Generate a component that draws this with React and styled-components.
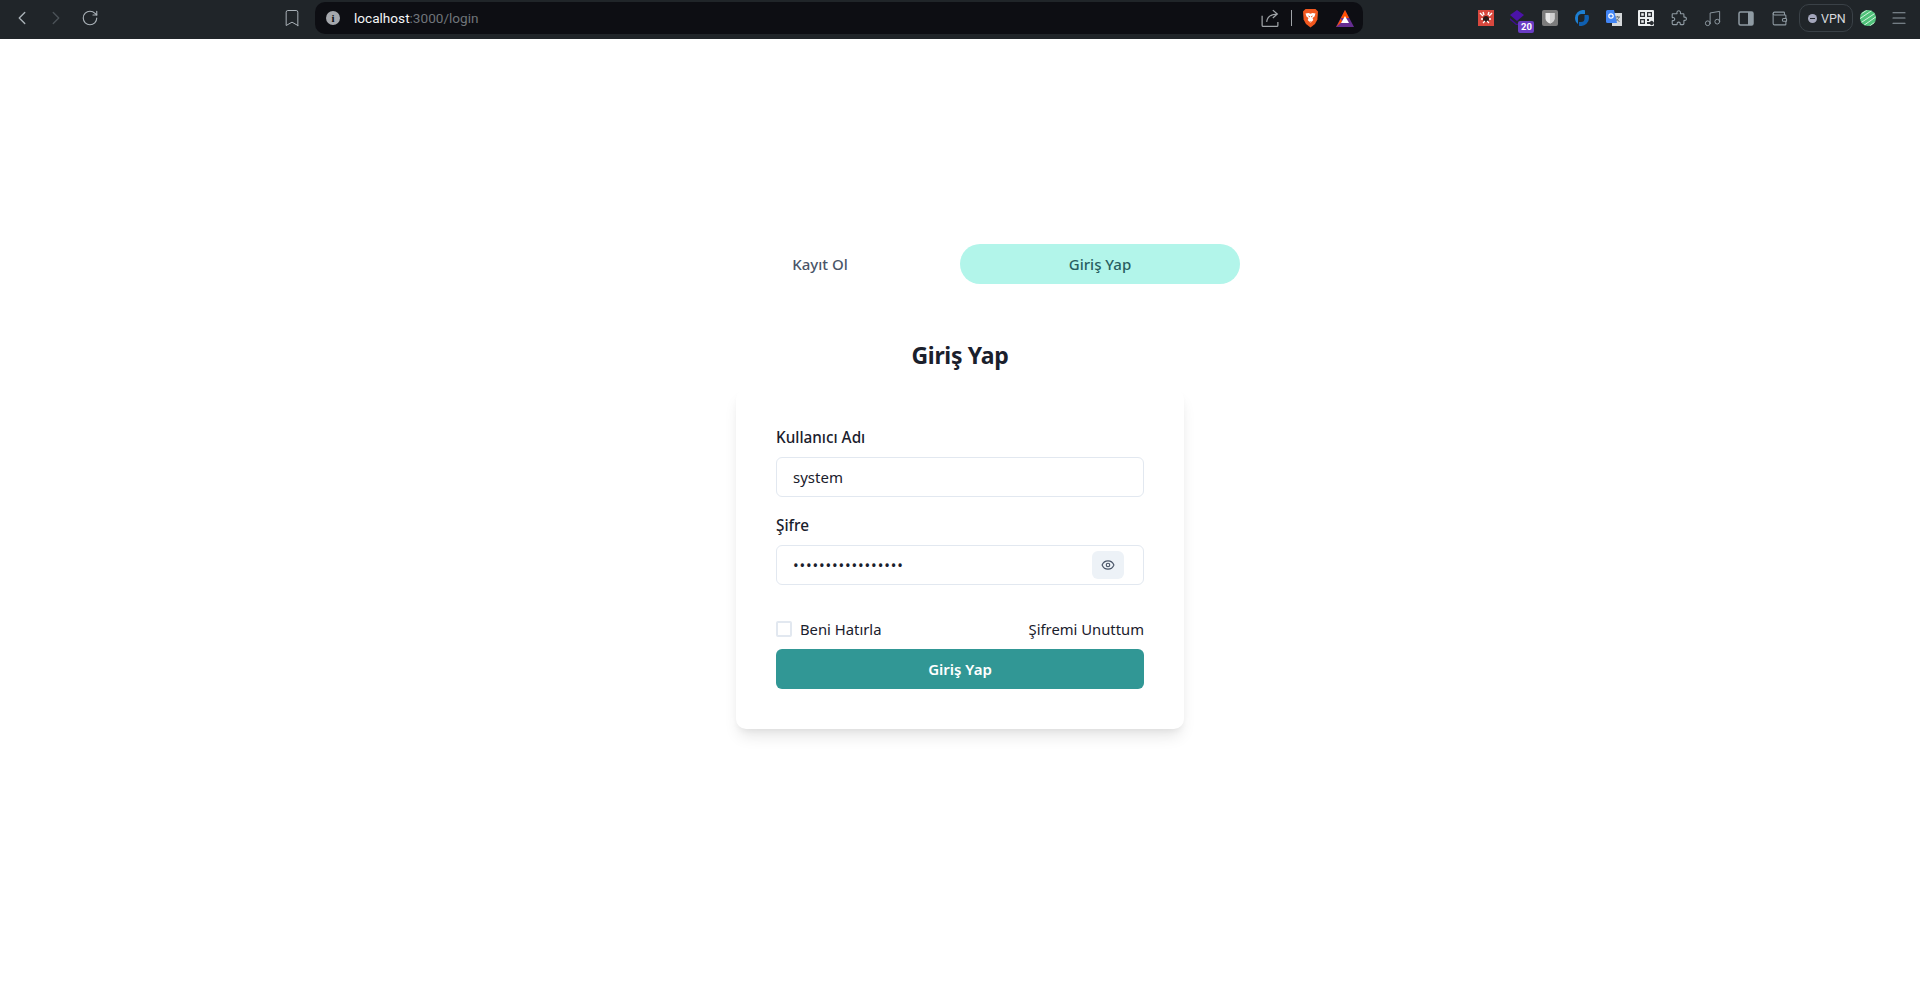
import React from 'react';
import styled, { createGlobalStyle } from 'styled-components';
import { ChevronLeft, ChevronRight, RotateCw, Bookmark, Music, Wallet, Eye, Menu } from 'lucide-react';

const GlobalStyle = createGlobalStyle`
  html, body {
    margin: 0;
    padding: 0;
    background: #fff;
    font-family: "Noto Sans", "Open Sans", sans-serif;
  }
  * { box-sizing: border-box; }
`;

const Page = styled.div`
  display: flex;
  flex-direction: column;
  height: 987px;
  overflow: hidden;
`;

const Toolbar = styled.header`
  display: flex;
  align-items: center;
  height: 39px;
  flex: none;
  background: #202529;
  padding: 0 6px 3px 5px;
`;

const NavButton = styled.div`
  display: flex;
  align-items: center;
  justify-content: center;
  width: 34px;
  height: 30px;
  flex: none;
  color: ${p => p.$color || '#aab2b8'};
`;

const NavGroup = styled.div`
  display: flex;
  align-items: center;
  flex: none;
  width: 310px;
`;

const BookmarkSlot = styled(NavButton)`
  margin-left: auto;
  margin-right: 6px;
`;

const AddressBar = styled.div`
  display: flex;
  align-items: center;
  width: 1048px;
  height: 32px;
  flex: none;
  border-radius: 10px;
  background: #0d0e13;
  padding: 0 0 0 11px;
`;

const InfoDot = styled.div`
  display: flex;
  align-items: center;
  justify-content: center;
  width: 14px;
  height: 14px;
  border-radius: 50%;
  background: #a5a8ad;
  color: #0d0e13;
  font-family: "Liberation Serif", serif;
  font-weight: 700;
  font-size: 11px;
  margin-right: 14px;
`;

const UrlHost = styled.span`
  font-family: Roboto, sans-serif;
  font-size: 13.6px;
  color: #f4f5f6;
`;

const UrlPath = styled.span`
  font-family: Roboto, sans-serif;
  font-size: 13.6px;
  color: #70757a;
`;

const AddressActions = styled.div`
  display: flex;
  align-items: center;
  margin-left: auto;
  padding-right: 1px;
`;

const Divider = styled.div`
  width: 1px;
  height: 16px;
  background: #a0a4a8;
  margin: 0 10px 0 12px;
`;

const BatSlot = styled(NavButton)`
  margin-left: 9px;
`;

const ExtensionGroup = styled.div`
  display: flex;
  align-items: center;
  margin-left: auto;
`;

const Ext = styled.div`
  display: flex;
  align-items: center;
  justify-content: center;
  position: relative;
  width: ${p => p.$w || 32}px;
  height: 30px;
  flex: none;
  color: #8f9ba3;
`;

const CountBadge = styled.span`
  position: absolute;
  right: 0;
  bottom: 0;
  width: 16px;
  height: 12px;
  border-radius: 2px;
  background: #6a3cc4;
  color: #fff;
  font-family: Roboto, sans-serif;
  font-weight: 700;
  font-size: 9.5px;
  line-height: 12px;
  text-align: center;
`;

const VpnPill = styled.div`
  display: flex;
  align-items: center;
  gap: 4px;
  width: 54px;
  height: 28px;
  flex: none;
  margin-left: 3px;
  padding-left: 8px;
  border: 1px solid #3a4147;
  border-radius: 10px;
  color: #d6d9dc;
  font-family: Roboto, sans-serif;
  font-size: 12.5px;
`;

const VpnDot = styled.span`
  display: flex;
  align-items: center;
  justify-content: center;
  width: 9px;
  height: 9px;
  border-radius: 50%;
  background: #a3a6bb;
  &::after {
    content: '';
    width: 5px;
    height: 1px;
    background: #202529;
  }
`;

const Content = styled.main`
  display: flex;
  flex-direction: column;
  align-items: center;
  padding-top: 205px;
`;

const Tabs = styled.div`
  display: flex;
  width: 560px;
`;

const Tab = styled.button`
  flex: 1;
  height: 40px;
  border: none;
  border-radius: 9999px;
  background: ${p => (p.$active ? '#b2f5ea' : 'transparent')};
  color: ${p => (p.$active ? '#285e61' : '#4a5568')};
  font-family: inherit;
  font-size: 15px;
  font-weight: 500;
  padding: 0;
`;

const Title = styled.h2`
  margin: 51px 0 0;
  height: 40px;
  line-height: 40px;
  font-size: 23px;
  letter-spacing: -0.3px;
  font-weight: 700;
  color: #1a202c;
`;

const Card = styled.form`
  width: 448px;
  margin-top: 14px;
  padding: 36px 40px 40px;
  border-radius: 10px;
  background: #fff;
  box-shadow: 0 10px 15px -3px rgba(0, 0, 0, 0.1), 0 4px 6px -2px rgba(0, 0, 0, 0.05);
`;

const Field = styled.div`
  margin-bottom: 16px;
`;

const Label = styled.label`
  display: block;
  height: 24px;
  line-height: 24px;
  margin-bottom: 8px;
  font-size: 15.3px;
  font-weight: 500;
  color: #1a202c;
`;

const InputWrap = styled.div`
  position: relative;
`;

const Input = styled.input`
  display: block;
  width: 100%;
  height: 40px;
  padding: 0 16px;
  border: 1px solid #e2e8f0;
  border-radius: 6px;
  outline: none;
  background: #fff;
  color: #1a202c;
  font-family: inherit;
  font-size: 15px;
  letter-spacing: ${p => (p.type === 'password' ? '0.87px' : 'normal')};
`;

const EyeButton = styled.button`
  position: absolute;
  top: 6px;
  right: 20px;
  display: flex;
  align-items: center;
  justify-content: center;
  width: 32px;
  height: 28px;
  padding: 0;
  border: none;
  border-radius: 6px;
  background: #edf2f7;
  color: #4a5568;
`;

const OptionsRow = styled.div`
  display: flex;
  align-items: center;
  justify-content: space-between;
  height: 24px;
  margin-top: 32px;
`;

const Remember = styled.label`
  display: flex;
  align-items: center;
  gap: 8px;
  font-size: 14.8px;
  color: #1a202c;
`;

const CheckBox = styled.span`
  width: 16px;
  height: 16px;
  border: 2px solid #e2e8f0;
  border-radius: 2px;
  background: #fff;
`;

const ForgotLink = styled.a`
  font-size: 14.8px;
  color: #1a202c;
`;

const Submit = styled.button`
  display: block;
  width: 100%;
  height: 40px;
  margin-top: 8px;
  border: none;
  border-radius: 6px;
  background: #319795;
  color: #fff;
  font-family: inherit;
  font-size: 15px;
  font-weight: 600;
`;

const ShareIcon = () => (
  <svg width="18" height="18" viewBox="0 0 16 16" fill="none" stroke="#a0a4a8" strokeWidth="1.100">
    <path d="M1 6v8.500a1 1 0 0 0 1 1h12a1 1 0 0 0 1-1v-3" />
    <path d="M5 11.500c.5-4 3.500-7 9.500-7M10.500 1l4 3.500-4 3.500" />
  </svg>
);

const BraveLion = () => (
  <svg width="17" height="20" viewBox="0 0 17 20">
    <path d="M3.500 1h10l2.500 2.500-.6 8L13 16l-4.500 3.500L4 16l-2.400-4.500L1 3.500z" fill="#f2581f" />
    <path d="M3.500 5.500 6.500 5l2 .8 2-.8 3 .5-1 3-2 1.500.8 2-2.800 3-2.800-3 .8-2-2-1.500z" fill="#fff" />
    <path d="M6.500 8 8 9M10.500 8 9 9M7.500 14h2" stroke="#f2581f" strokeWidth="1" />
  </svg>
);

const BatTriangle = () => (
  <svg width="18" height="17" viewBox="0 0 18 17">
    <path d="M9 0 18 17H0z" fill="#662d91" />
    <path d="M9 0 13 8H5z" fill="#ff5000" />
    <path d="M5 8 1.500 15 0 17l6-5z" fill="#ff5000" />
    <path d="M9 6 13 13H5z" fill="#fff" />
  </svg>
);

const RedExt = () => (
  <svg width="16" height="16" viewBox="0 0 16 16">
    <rect width="16" height="16" fill="#d8483e" />
    <circle cx="8" cy="9" r="3" fill="#2b1a18" />
    <path d="M2 3l3 3M14 3l-3 3M3 9h2M11 9h2M5 2l1 3M11 2l-1 3" stroke="#fff" strokeWidth="1.400" />
    <path d="M5 13l2-2M11 13l-2-2" stroke="#fff" strokeWidth="1.200" />
  </svg>
);

const PurpleGem = () => (
  <svg width="18" height="18" viewBox="0 0 18 18">
    <path d="M8 1l7 5-7 6-7-6z" fill="#4b13a8" />
    <path d="M1 9l7 6 3-2v3H7L1 11z" fill="#3d0f8e" />
  </svg>
);

const ShieldExt = () => (
  <svg width="16" height="16" viewBox="0 0 16 16">
    <rect width="16" height="16" rx="2" fill="#7c7c7c" />
    <path d="M3.500 3h9v5.500c0 2.500-2 4-4.500 5-2.500-1-4.500-2.500-4.500-5z" fill="#e8e8e8" />
    <path d="M8 3h4.500v5.500c0 2.500-2 4-4.500 5z" fill="#cfcfcf" />
  </svg>
);

const BlueSwirl = () => (
  <svg width="16" height="16" viewBox="0 0 16 16">
    <path d="M9.500 0a8 8 0 0 0-8.500 8c0 2.500 1 4.500 3 6V7.500A3.500 3.500 0 0 1 7.500 4H11V.2A8 8 0 0 0 9.500 0z" fill="#1d7fd1" />
    <path d="M6.500 16a8 8 0 0 0 8.500-8c0-1-.2-2-.6-3H10.500v3.500A3.500 3.500 0 0 1 7 12H5v3.800c.5.100 1 .2 1.500.2z" fill="#0f5fb0" />
  </svg>
);

const TranslateExt = () => (
  <svg width="16" height="16" viewBox="0 0 16 16">
    <rect x="6" y="3" width="10" height="13" fill="#d5d8da" />
    <path d="M9 7h5M11.500 6v1M13 7c-.5 2-2 3.500-4 4.500M10 8.500c.8 1.300 2 2.400 3.500 3" stroke="#6d7478" strokeWidth="1" fill="none" />
    <path d="M0 1.500A1.500 1.500 0 0 1 1.500 0H8l3 13H1.500A1.500 1.500 0 0 1 0 11.500z" fill="#4285f4" />
    <circle cx="5" cy="6" r="2.200" fill="none" stroke="#fff" strokeWidth="1.200" />
  </svg>
);

const QrExt = () => (
  <svg width="16" height="16" viewBox="0 0 16 16">
    <rect width="16" height="16" rx="1" fill="#eceff0" />
    <path d="M2 2h5v5H2zM3.200 3.200v2.600h2.600V3.200zM9 2h5v5H9zM10.200 3.200v2.600h2.600V3.200zM2 9h5v5H2zM3.200 10.200v2.600h2.600v-2.600z" fill="#2b2f33" fillRule="evenodd" />
    <path d="M9 9h2v2H9zM12 12a2 2 0 1 1 0 2h-3v-2z" fill="#2b2f33" />
  </svg>
);

const PuzzleOutline = () => (
  <svg width="16" height="16" viewBox="0 0 16 16" fill="none" stroke="#8f9ba3" strokeWidth="1.100" strokeLinejoin="round">
    <path d="M6 3.200C5.600 1.800 6.500.8 7.700.8s2.100 1 1.700 2.400c-.1.400.1.600.5.600h2.400c.4 0 .6.200.6.600v2.300c0 .4.200.6.600.5 1.100-.3 1.900.5 1.900 1.600s-.8 1.900-1.900 1.600c-.4-.1-.6.100-.6.500v2.700c0 .6-.4 1-1 1H9.700c-.4 0-.6-.2-.5-.6.300-1.100-.5-1.900-1.500-1.900s-1.800.8-1.500 1.900c.1.400-.1.600-.5.600H2.200c-.6 0-1-.4-1-1v-2.500c0-.4.200-.6.600-.5 1.100.3 1.900-.5 1.900-1.500s-.8-1.800-1.900-1.500c-.4.100-.6-.1-.6-.5V4.400c0-.4.200-.6.600-.6h3.700c.4 0 .6-.2.500-.6z" />
  </svg>
);

const PanelIcon = () => (
  <svg width="16" height="15" viewBox="0 0 16 15">
    <rect x="1" y="1" width="14" height="13" rx="1.500" fill="none" stroke="#8f9ba3" strokeWidth="1.500" />
    <rect x="10" y="1" width="5" height="13" fill="#8f9ba3" />
  </svg>
);

const SphereIcon = () => (
  <svg width="16" height="16" viewBox="0 0 16 16">
    <defs>
      <clipPath id="sphere"><circle cx="8" cy="8" r="8" /></clipPath>
    </defs>
    <g clipPath="url(#sphere)">
      <rect width="16" height="16" fill="#4fc27a" />
      <path d="M-2 6 10-2M-2 10 14-1M-1 14 17 2M3 16 17 6M7 18 18 10" stroke="#d2f3dc" strokeWidth="1" />
    </g>
  </svg>
);

const App = () => (
  <Page>
    <GlobalStyle />
    <Toolbar>
      <NavGroup>
        <NavButton><ChevronLeft size={22} strokeWidth={1.500} /></NavButton>
        <NavButton $color="#4b5257"><ChevronRight size={22} strokeWidth={1.500} /></NavButton>
        <NavButton><RotateCw size={18} strokeWidth={1.500} /></NavButton>
        <BookmarkSlot><Bookmark size={20} strokeWidth={1.200} /></BookmarkSlot>
      </NavGroup>
      <AddressBar>
        <InfoDot>i</InfoDot>
        <UrlHost>localhost</UrlHost>
        <UrlPath>:3000/login</UrlPath>
        <AddressActions>
          <ShareIcon />
          <Divider />
          <BraveLion />
          <BatSlot><BatTriangle /></BatSlot>
        </AddressActions>
      </AddressBar>
      <ExtensionGroup>
        <Ext><RedExt /></Ext>
        <Ext><PurpleGem /><CountBadge>20</CountBadge></Ext>
        <Ext><ShieldExt /></Ext>
        <Ext><BlueSwirl /></Ext>
        <Ext><TranslateExt /></Ext>
        <Ext><QrExt /></Ext>
        <Ext $w={33.4}><PuzzleOutline /></Ext>
        <Ext $w={33.4}><Music size={19} strokeWidth={1.200} /></Ext>
        <Ext $w={33.4}><PanelIcon /></Ext>
        <Ext $w={33.4}><Wallet size={17} strokeWidth={1.500} /></Ext>
        <VpnPill><VpnDot />VPN</VpnPill>
        <Ext $w={30}><SphereIcon /></Ext>
        <Ext $w={31}><Menu size={18} strokeWidth={1.500} /></Ext>
      </ExtensionGroup>
    </Toolbar>
    <Content>
      <Tabs>
        <Tab type="button">Kayıt Ol</Tab>
        <Tab type="button" $active>Giriş Yap</Tab>
      </Tabs>
      <Title>Giriş Yap</Title>
      <Card onSubmit={e => e.preventDefault()}>
        <Field>
          <Label>Kullanıcı Adı</Label>
          <Input type="text" defaultValue="system" />
        </Field>
        <Field>
          <Label>Şifre</Label>
          <InputWrap>
            <Input type="password" defaultValue="12345678901234567" />
            <EyeButton type="button"><Eye size={14} strokeWidth={2} /></EyeButton>
          </InputWrap>
        </Field>
        <OptionsRow>
          <Remember><CheckBox />Beni Hatırla</Remember>
          <ForgotLink>Şifremi Unuttum</ForgotLink>
        </OptionsRow>
        <Submit type="submit">Giriş Yap</Submit>
      </Card>
    </Content>
  </Page>
);

export default App;
